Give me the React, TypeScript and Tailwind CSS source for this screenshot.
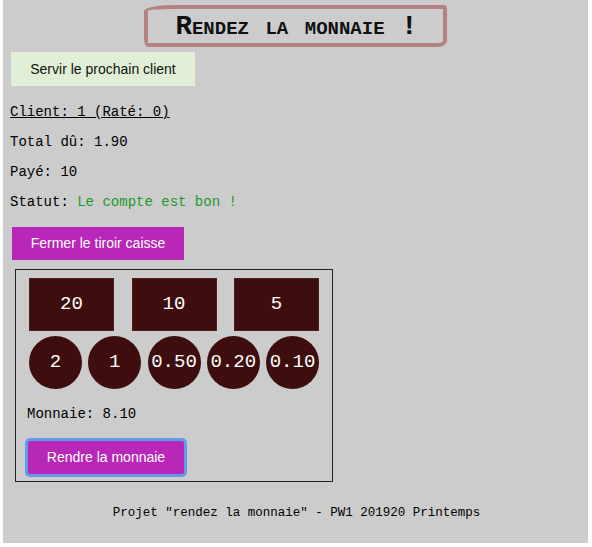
import React from "react";

const mono = "font-['Liberation_Mono','Courier_New',monospace]";
const sans = "font-['Liberation_Sans',Arial,sans-serif]";

export default function App() {
  const bills = ["20", "10", "5"];
  const coins = ["2", "1", "0.50", "0.20", "0.10"];
  return (
    <div className="bg-white pl-[3px] pr-[4px] pb-[4px] w-[592px] h-[547px]">
      <div className={`bg-[#cccccc] h-[543px] flex flex-col ${mono} text-black`}>
        <div className="self-center mt-[5px] w-[303px] h-[42px] border-[4px] border-[#b58181] rounded-[30px_3px_10px_4px/6px_3px_6px_8px] flex items-center justify-center pt-[2px]">
          <h1 className="text-[27.5px] font-bold [font-variant:small-caps] leading-none text-[#111] pl-[2px]">
            Rendez la monnaie !
          </h1>
        </div>

        <button
          className={`ml-[8px] mt-[5px] w-[184px] h-[34px] bg-[#e1efd6] text-[14px] text-[#111] ${sans}`}
        >
          Servir le prochain client
        </button>

        <div className="ml-[7px] mt-[18px] text-[14px] leading-[16px] flex flex-col gap-[14px]">
          <p className="underline">Client: 1 (Raté: 0)</p>
          <p>Total dû: 1.90</p>
          <p>Payé: 10</p>
          <p>
            Statut: <span className="text-[#1c9a2c]">Le compte est bon !</span>
          </p>
        </div>

        <button
          className={`ml-[9px] mt-[17px] w-[172px] h-[33px] bg-[#b827b8] text-white text-[14px] ${sans}`}
        >
          Fermer le tiroir caisse
        </button>

        <div className="ml-[12px] mt-[9px] w-[318px] h-[213px] border border-[#222] flex flex-col pl-[11px] pr-[13px] pt-[8px]">
          <div className="flex justify-between pl-[2px]">
            {bills.map((b) => (
              <div
                key={b}
                className="w-[85px] h-[53px] bg-[#3d0e0d] border border-[#4d1e1d] flex items-center justify-center text-white text-[19px]"
              >
                {b}
              </div>
            ))}
          </div>
          <div className="flex justify-between pl-[2px] mt-[5px]">
            {coins.map((c) => (
              <div
                key={c}
                className="w-[53px] h-[53px] rounded-full bg-[#3d0e0d] flex items-center justify-center text-white text-[19px]"
              >
                {c}
              </div>
            ))}
          </div>
          <p className="mt-[17px] text-[14px] leading-[16px]">Monnaie: 8.10</p>
          <div className="mt-[19px]">
            <button
              className={`ml-[1px] w-[156px] h-[33px] bg-[#b827b8] text-white text-[14px] rounded-[2px] shadow-[0_0_0_3px_#5f9de9] ${sans}`}
            >
              Rendre la monnaie
            </button>
          </div>
        </div>

        <p className="mt-[24px] text-center text-[12.5px] leading-[14px] pl-[2px]">
          Projet "rendez la monnaie" - PW1 201920 Printemps
        </p>
      </div>
    </div>
  );
}
